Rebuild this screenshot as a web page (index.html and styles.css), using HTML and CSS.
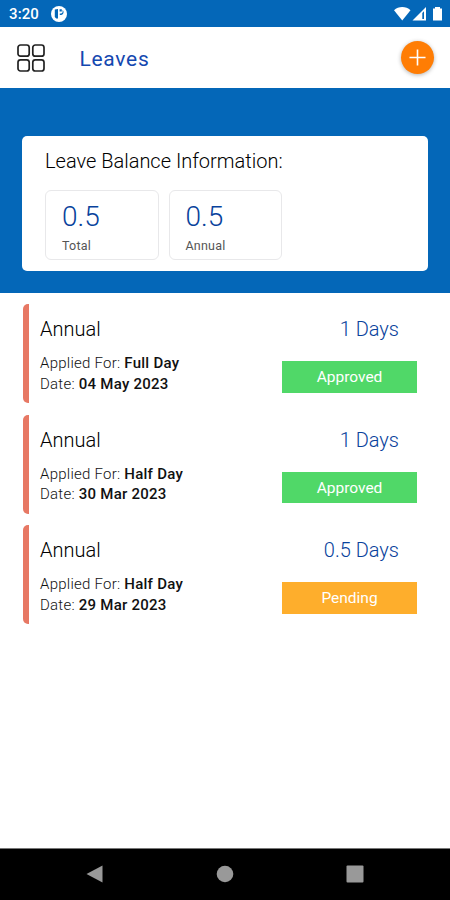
FILE: index.html
```html
<!DOCTYPE html>
<html lang="en">
<head>
<meta charset="utf-8">
<title>Leaves</title>
<link rel="stylesheet" href="styles.css">
</head>
<body>
<div class="screen">
  <div class="status-bar">
    <span class="clock">3:20</span>
    <svg class="app-badge" viewBox="0 0 16 16"><circle cx="8" cy="8" r="8" fill="#fff"/><path d="M3.800 3.600L7 3v9.500H5.200L3.800 11zM8.600 3.200h2.200v2.400H8.600zM11.600 4c1.400 1.200 1.300 3.600-.2 4.500-.7.400-1.500.5-2.600.5V7.600c1.700 0 2.600-.5 2.800-1.600z" fill="#0467b8"/></svg>
    <svg class="signals" viewBox="0 0 50 16"><path d="M0 4.200C4.500 0 12 0 16.500 4.200L8.250 14.500z" fill="#fff"/><path d="M18.500 14.500L32 1v13.500z" fill="#fff"/><path d="M28.300 7v6h1.700V5.300z" fill="#0467b8"/><path d="M39 2.500h2V1h5v1.500h2v12h-9z" fill="#fff"/></svg>
  </div>
  <header class="app-bar">
    <svg class="menu" viewBox="0 0 28 28" fill="none" stroke="#222" stroke-width="1.700"><rect x="1" y="1" width="11.200" height="11.200" rx="2.500"/><rect x="15.800" y="1" width="11.200" height="11.200" rx="2.500"/><rect x="1" y="15.800" width="11.200" height="11.200" rx="2.500"/><rect x="15.800" y="15.800" width="11.200" height="11.200" rx="2.500"/></svg>
    <h1>Leaves</h1>
    <button class="add" aria-label="Add"><svg viewBox="0 0 18 18"><path d="M9 .5v17M.5 9h17" stroke="#fff" stroke-width="1.700"/></svg></button>
  </header>
  <section class="hero">
    <div class="balance">
      <h2>Leave Balance Information:</h2>
      <div class="tiles">
        <div class="tile"><strong>0.5</strong><span>Total</span></div>
        <div class="tile"><strong>0.5</strong><span>Annual</span></div>
      </div>
    </div>
  </section>
  <main class="leaves">
    <article class="leave">
      <div class="info"><h3>Annual</h3><p>Applied For: <b>Full Day</b></p><p>Date: <b>04 May 2023</b></p></div>
      <div class="state"><span class="days">1 Days</span><span class="tag approved">Approved</span></div>
    </article>
    <article class="leave">
      <div class="info"><h3>Annual</h3><p>Applied For: <b>Half Day</b></p><p>Date: <b>30 Mar 2023</b></p></div>
      <div class="state"><span class="days">1 Days</span><span class="tag approved">Approved</span></div>
    </article>
    <article class="leave">
      <div class="info"><h3>Annual</h3><p>Applied For: <b>Half Day</b></p><p>Date: <b>29 Mar 2023</b></p></div>
      <div class="state"><span class="days">0.5 Days</span><span class="tag pending">Pending</span></div>
    </article>
  </main>
  <nav class="nav-bar">
    <svg viewBox="0 0 18 18"><path d="M.5 9L16.500 .5v17z"/></svg>
    <svg viewBox="0 0 18 18"><circle cx="9" cy="9" r="8.300"/></svg>
    <svg viewBox="0 0 18 18"><rect x=".5" y=".5" width="17" height="17" rx="1"/></svg>
  </nav>
</div>
</body>
</html>
```

FILE: styles.css
```css
* { box-sizing: border-box; }
body, h1, h2, h3, p { margin: 0; font-weight: 400; }
body { font-family: Roboto, sans-serif; background: #fff; }
svg { display: block; }
.screen { display: flex; flex-direction: column; height: 900px; width: 450px; }

.status-bar { display: flex; align-items: center; height: 27px; padding: 1px 7px 0 9px; background: #0467b8; color: #fff; }
.clock { font-size: 15px; font-weight: 500; letter-spacing: .1px; width: 42px; }
.app-badge { width: 16px; height: 16px; }
.signals { width: 50px; height: 16px; margin-left: auto; margin-right: -1px; }

.app-bar { display: flex; align-items: center; height: 61px; padding: 0 16px 0 17px; }
.menu { width: 28px; height: 28px; }
.app-bar h1 { margin-left: 34.500px; padding-top: 2px; font-size: 21px; font-weight: 400; letter-spacing: .7px; color: #1448b0; }
.add { display: grid; place-items: center; width: 33px; height: 33px; margin-left: auto; padding: 0; border: 0; border-radius: 50%; background: #ff7d04; box-shadow: 0 1px 4px rgba(0, 0, 0, .3); }
.add svg { width: 17px; height: 17px; }

.hero { height: 205px; padding: 48px 22px 0; background: #0467b8; }
.balance { width: 406px; height: 135px; padding: 13px 23px; border-radius: 5px; background: #fff; }
.balance h2 { font-size: 20px; font-weight: 300; line-height: 24px; color: #000; }
.tiles { display: flex; gap: 10px; margin-top: 17px; }
.tile { display: flex; flex-direction: column; width: 113.500px; height: 70px; padding: 9px 16px 0; border: 1px solid #e8e8ea; border-radius: 6px; }
.tile strong { font-size: 28px; font-weight: 300; line-height: 34px; color: #08429c; }
.tile span { margin-top: 4px; font-size: 12.500px; line-height: 16px; letter-spacing: .2px; color: #555; }

.leaves { display: flex; flex-direction: column; gap: 11.500px; flex: 1; padding: 11px 33px 0 23px; }
.leave { display: flex; justify-content: space-between; height: 99px; padding-left: 11px; border-left: 6px solid #e77864; border-radius: 5px 0 0 5px; }
.info { padding-top: 12px; }
.info h3 { margin-bottom: 11px; font-size: 20px; font-weight: 300; line-height: 26px; color: #000; }
.info p { font-size: 15px; font-weight: 300; line-height: 20.500px; letter-spacing: .25px; color: #111; white-space: nowrap; }
.info b { font-weight: 500; color: #111; }
.state { display: flex; flex-direction: column; width: 135px; padding-top: 12px; }
.days { padding-right: 18px; font-size: 20px; font-weight: 300; line-height: 26px; text-align: right; color: #08429c; }
.tag { height: 31.500px; margin-top: 19px; font-size: 15.500px; line-height: 33px; text-align: center; color: #fff; }
.approved { background: #50d868; }
.pending { background: #feae2c; }

.nav-bar { display: flex; justify-content: space-between; align-items: center; height: 52px; padding: 0 86px 2px; border-top: 1px solid #777; background: #000; fill: #999; }
.nav-bar svg { width: 18px; height: 18px; }
```
